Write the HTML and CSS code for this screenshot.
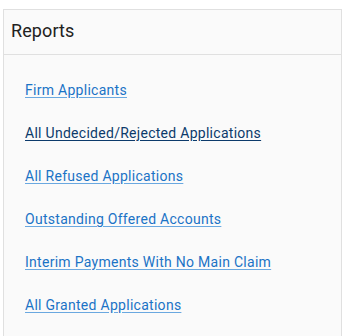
FILE: index.html
```html
<!DOCTYPE html>
<html lang="en">
<head>
<meta charset="utf-8">
<title>Reports</title>
<link rel="stylesheet" href="styles.css">
</head>
<body>
<section class="card">
  <header class="card-header">
    <h2 class="card-title">Reports</h2>
  </header>
  <ul class="report-list">
    <li><a class="report-link" href="#">Firm Applicants</a></li>
    <li><a class="report-link is-active" href="#">All Undecided/Rejected Applications</a></li>
    <li><a class="report-link" href="#">All Refused Applications</a></li>
    <li><a class="report-link" href="#">Outstanding Offered Accounts</a></li>
    <li><a class="report-link" href="#">Interim Payments With No Main Claim</a></li>
    <li><a class="report-link" href="#">All Granted Applications</a></li>
  </ul>
</section>
</body>
</html>
```
FILE: styles.css
```css
html, body {
  margin: 0;
  padding: 0;
  background: #ffffff;
}

body {
  padding: 9px 3px 0 3px;
  font-family: Roboto, "Liberation Sans", Arial, sans-serif;
}

.card {
  background: #fafafa;
  border: 1px solid #e0e0e0;
  border-bottom: none;
  min-height: 340px;
}

.card-header {
  border-bottom: 1px solid #e0e0e0;
  padding: 9px 7px 11px 7px;
}

.card-title {
  margin: 0;
  font-size: 18px;
  line-height: 24px;
  font-weight: 400;
  letter-spacing: 0.1px;
  color: #212121;
}

.report-list {
  list-style: none;
  margin: 0;
  padding: 25px 0 0 21px;
  display: flex;
  flex-direction: column;
  gap: 23px;
}

.report-list li {
  line-height: 20px;
  font-size: 14px;
  letter-spacing: 0.28px;
}

.report-link {
  color: #1a73c6;
  text-decoration: underline;
  text-decoration-color: #6aa8e0;
  text-underline-offset: 2px;
}

.report-link.is-active {
  color: #0c3a6b;
  text-decoration-color: #0c3a6b;
}
```
